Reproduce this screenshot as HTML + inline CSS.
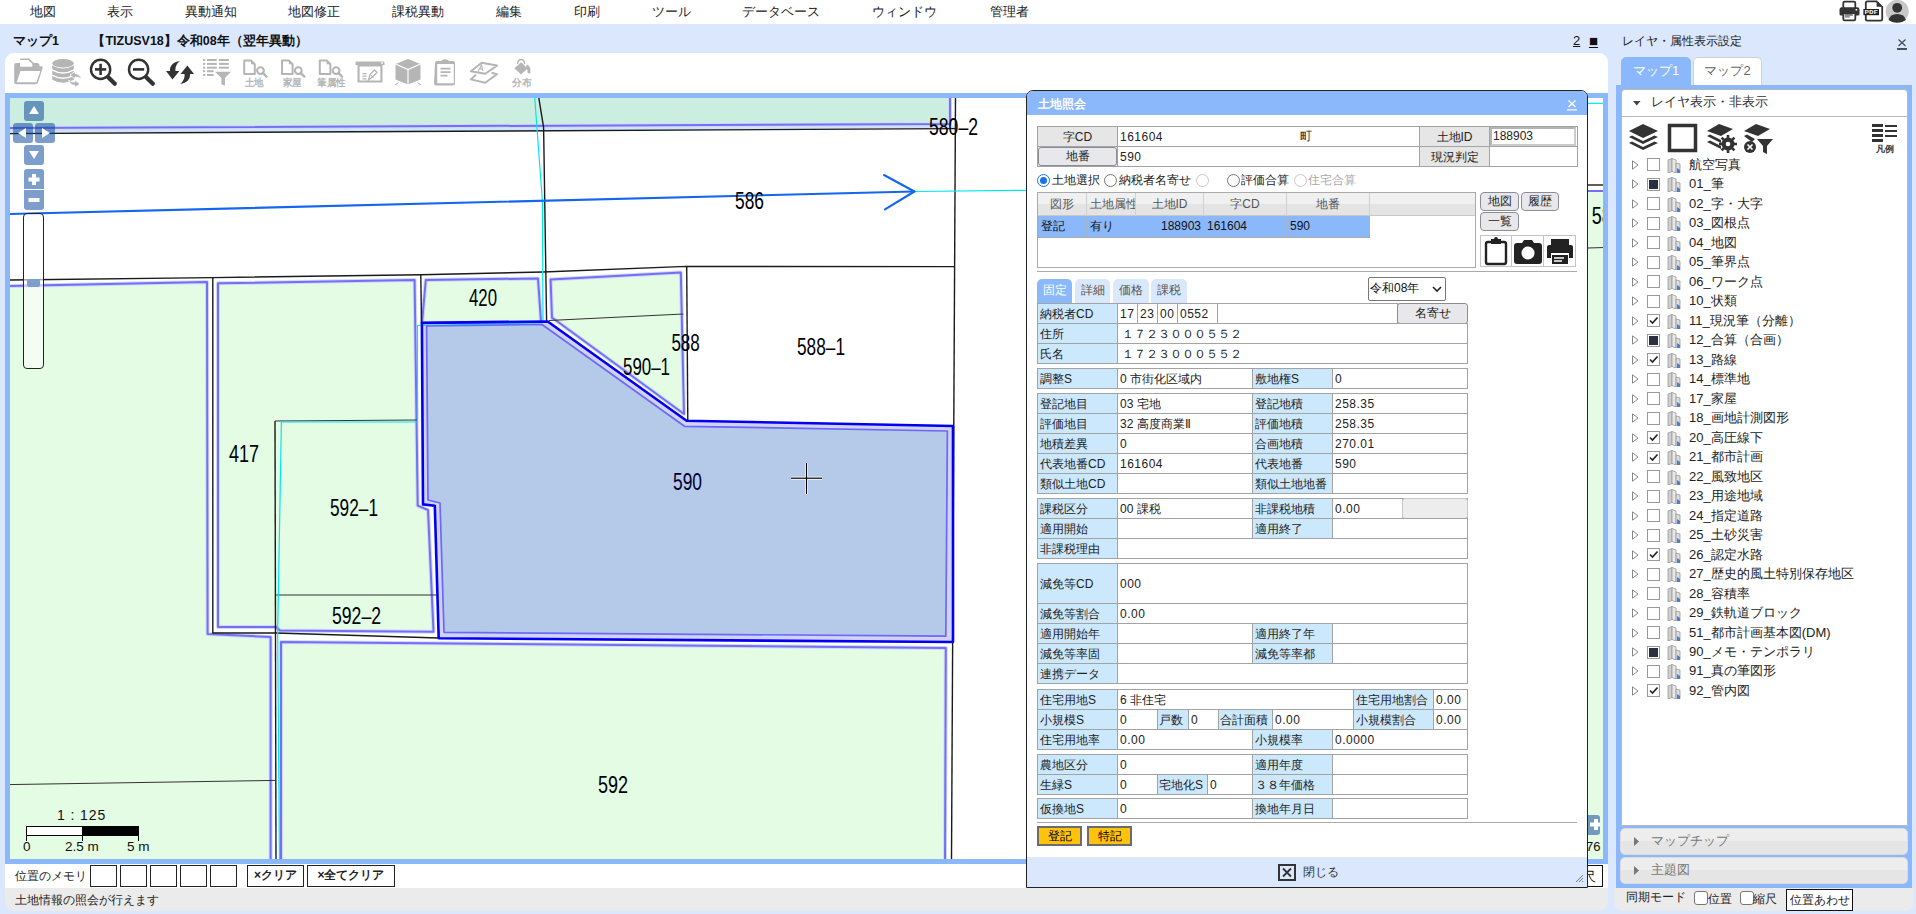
<!DOCTYPE html>
<html><head><meta charset="utf-8">
<style>
*{box-sizing:border-box;margin:0;padding:0}
html,body{width:1916px;height:914px;overflow:hidden}
body{position:relative;background:#dae7fc;font-family:"Liberation Sans",sans-serif;font-size:13px;color:#222}
.a{position:absolute}
#menu{left:0;top:0;width:1916px;height:24px;background:#fff}
#menu span{position:absolute;top:4px;font-size:13px;line-height:16px;color:#222;white-space:nowrap}
#ttl{left:13px;top:33px;font-weight:bold;font-size:12.5px;line-height:16px;white-space:nowrap;color:#111}
#tool{left:5px;top:53px;width:1603px;height:45px;background:#fff;border-radius:9px 9px 0 0}
#mapbox{left:5px;top:93px;width:1603px;height:771px;border:5px solid #8ab8fb;background:#fff;overflow:hidden}
#mem{left:5px;top:864px;width:1603px;height:24px;background:#fff}
#stat{left:5px;top:888px;width:1603px;height:23px;background:#ebebeb;border-radius:0 0 9px 9px}
#rp{left:1616px;top:85px;width:296px;height:803px;background:#8ab8fb}
#rpbot{left:1614px;top:887px;width:300px;height:23px;background:#ebebeb;border-radius:0 0 9px 9px}
.c{position:absolute;border:1px solid #a3a3a3;overflow:hidden;white-space:nowrap}
#dlg{left:1026px;top:90px;width:562px;height:798px;background:#fff;border:1px solid #222;border-radius:7px 7px 0 0;overflow:hidden}
</style></head><body>
<div id="menu" class="a">
<span style="left:30px">地図</span><span style="left:107px">表示</span><span style="left:185px">異動通知</span><span style="left:288px">地図修正</span><span style="left:392px">課税異動</span><span style="left:496px">編集</span><span style="left:574px">印刷</span><span style="left:652px">ツール</span><span style="left:742px">データベース</span><span style="left:872px">ウィンドウ</span><span style="left:990px">管理者</span>
</div>
<div id="ttl" class="a">マップ1<span style="margin-left:33.5px">【TIZUSV18】令和08年（翌年異動）</span></div>
<div id="tool" class="a"></div>
<!--TOOL-->
<svg class="a" style="left:0;top:53px" width="560" height="40" viewBox="0 53 560 40">
<g fill="#b5b5b5">
<!-- folder -->
<path d="M14.2 65 q0-2 2-2 h3.8 v-3.2 q0-1.3 1.3-1.3 h8 l4.6 4.6 v0 h3 q2.6 0 2.6 2.6 v0.6 h1.6 q2 0 1.5 2 l-4.5 14 q-0.6 2-2.6 2 h-19.3 q-2 0-2-2z"/>
<path d="M20 60 h8.5 l3.8 3.8 v3 h-12.3z" fill="#fff"/>
<path d="M20.5 71 h19.8 l-3.8 11.3 h-19.8z" fill="#fff"/>
<!-- database -->
<ellipse cx="63" cy="63.3" rx="10.8" ry="4.3"/>
<path d="M52.2 65.5 v3.8 q10.8 6 21.6 0 v-3.8 q-10.8 6-21.6 0z"/>
<path d="M52.2 70.8 v3.8 q10.8 6 21.6 0 v-3.8 q-10.8 6-21.6 0z"/>
<path d="M52.2 76 v3.8 q10.8 6 21.6 0 v-3.8 q-10.8 6-21.6 0z"/>
<path d="M70 75 l5-3.5 v2 q5 0.5 6.5 5.5 q-3-2.5-6.5-2 v2z" stroke="#fff" stroke-width="0.8"/>
<path d="M80 84 l-5 3.5 v-2 q-5-0.5-6.5-5.5 q3 2.5 6.5 2 v-2z" stroke="#fff" stroke-width="0.8"/>
<!-- list filter -->
<rect x="203" y="59" width="2.2" height="2"/><rect x="203" y="62.9" width="2.2" height="2"/><rect x="203" y="66.7" width="2.2" height="2"/><rect x="203" y="70.2" width="2.2" height="2"/><rect x="203" y="74" width="2.2" height="2"/>
<rect x="207" y="59" width="9.8" height="2"/><rect x="219" y="59" width="9.9" height="2"/>
<rect x="207" y="62.9" width="9.8" height="2"/><rect x="219" y="62.9" width="9.9" height="2"/>
<rect x="207" y="66.7" width="9.8" height="2"/><rect x="219" y="66.7" width="9.9" height="2"/>
<rect x="207" y="70.2" width="6.6" height="2"/><rect x="207" y="74" width="6.6" height="2"/>
<path d="M215 71.8 h16 l-6 6.3 v7.6 l-3.6-1.4 v-6.2z"/>
<!-- board -->
<path d="M356.5 61.5 h27 q1 0 1 1 v2.5 h-29 v-2.5 q0-1 1-1z"/>
<path d="M357.5 65 h25 v17.5 h-25z M359.6 66.5 v14 h20.8 v-14z"/>
<circle cx="382" cy="63" r="0.9" fill="#fff"/>
<path d="M362.5 73 h4 v1.2 h-4z M362.5 75.6 h4 v1.2 h-4z M362.5 78.2 h4 v1.2 h-4z"/>
<path d="M368.5 80 l1.5-5.5 l4.5-4.5 l2.5 2.5 l-4.5 4.5z M371 75.5 l2.5 2" fill="none" stroke="#b5b5b5" stroke-width="1.3"/>
<!-- cube -->
<path d="M408 59 l12.5 5 v15.5 l-12.5 5 l-12.5-5 v-15.5z"/>
<path d="M408 69.5 v15" stroke="#fff" stroke-width="1.2"/>
<path d="M395.5 64 l12.5 5.5 l12.5-5.5" stroke="#fff" stroke-width="1.2" fill="none"/>
<path d="M395 85 l3.5-2.5 M421 85 l-3.5-2.5" stroke="#b5b5b5" stroke-width="1"/>
<!-- clipboard -->
<path d="M435 63 q0-2 2-2 h4 q1-1.8 4-1.8 q3 0 4 1.8 h4 q2 0 2 2 v20.5 q0 2-2 2 h-17 q-2 0-2-2z M437.2 64 v19.3 h16.6 v-19.3z"/>
<path d="M440.5 67.8 h10 v1.6 h-10z M440.5 71.3 h10 v1.6 h-10z M440.5 74.8 h7 v1.6 h-7z"/>
</g>
<!-- layers A -->
<g fill="none" stroke="#b5b5b5" stroke-width="2" stroke-linejoin="round">
<path d="M470.8 71.2 L481.7 62.8 L497 65.6 L485.2 73.8z"/>
<path d="M476 74.8 L470.8 79.4 L485.2 82.8 L497 74.2 L491.5 72.8"/>
</g>
<path d="M478 71.5 l3.5-6.5 l1.3 6 M479.5 69 h3" fill="none" stroke="#b5b5b5" stroke-width="1.1"/>
<!-- bucket -->
<g fill="#b5b5b5">
<path d="M514.3 68.2 L521.2 62.3 L527.6 68.5 L521 74.6z"/>
<path d="M527 64.5 q3.5 2 3.4 5.5 v3 q-1.7 1.3-2.8-0.5 q0-3 -1.6-5.5z"/>
</g>
<path d="M517.5 63.8 q0.5-4.3 3.6-4.3 q3.3 0 3.5 4.6" fill="none" stroke="#b5b5b5" stroke-width="1.4"/>
<!-- doc + magnifier icons -->
<g fill="none" stroke="#b5b5b5" stroke-width="2" stroke-linejoin="round">
<path d="M244.2 60.5 h6.8 l3.8 3.8 v9.8 h-10.6z"/>
<circle cx="260.5" cy="70.6" r="3.4"/>
<path d="M282 60.5 h6.8 l3.8 3.8 v9.8 h-10.6z"/>
<circle cx="298.3" cy="70.6" r="3.4"/>
<path d="M319.8 60.5 h6.8 l3.8 3.8 v9.8 h-10.6z"/>
<circle cx="336.1" cy="70.6" r="3.4"/>
</g>
<g fill="#b5b5b5"><path d="M251 60.5 l3.8 3.8 h-3.8z"/><path d="M288.8 60.5 l3.8 3.8 h-3.8z"/><path d="M326.6 60.5 l3.8 3.8 h-3.8z"/></g>
<g stroke="#b5b5b5" stroke-width="2.4" stroke-linecap="round">
<line x1="263" y1="73.2" x2="266.5" y2="76.6"/><line x1="300.8" y1="73.2" x2="304.3" y2="76.6"/><line x1="338.6" y1="73.2" x2="342.1" y2="76.6"/>
</g>
<g font-size="9.5" font-weight="bold" fill="#b5b5b5" font-family="Liberation Sans">
<text x="244.5" y="85.8" textLength="19" lengthAdjust="spacingAndGlyphs">土地</text><text x="282.5" y="85.8" textLength="19" lengthAdjust="spacingAndGlyphs">家屋</text><text x="317" y="85.8" textLength="28.5" lengthAdjust="spacingAndGlyphs">筆属性</text><text x="512.3" y="85.8" textLength="19.5" lengthAdjust="spacingAndGlyphs">分布</text>
</g>
<!-- zoom in/out -->
<g fill="none" stroke="#333" stroke-width="2.4">
<circle cx="100.6" cy="69.4" r="9.6"/>
<circle cx="138.6" cy="69.4" r="9.6"/>
</g>
<g stroke="#333" stroke-width="4.2" stroke-linecap="round"><line x1="108.5" y1="77.5" x2="114.8" y2="83.8"/><line x1="146.5" y1="77.5" x2="152.8" y2="83.8"/></g>
<g stroke="#333" stroke-width="2.6"><line x1="95" y1="69.4" x2="106.2" y2="69.4"/><line x1="100.6" y1="63.8" x2="100.6" y2="75"/><line x1="133" y1="69.4" x2="144.2" y2="69.4"/></g>
<!-- refresh -->
<g fill="#333">
<path d="M180 61 C173 62 169.5 66 170 71 L166 71 L172.5 79.6 L179.4 71 L175.5 71 C175 67 177 63 180 61 Z"/>
<path d="M180 84 C187 83 190.5 79 190 74 L194 74 L187.4 65.4 L180.5 74 L184.5 74 C185 78 183 82 180 84 Z"/>
</g>
</svg>
<!--/TOOL-->
<div id="mapbox" class="a"><svg class="a" style="left:0;top:0" width="1593" height="761" viewBox="10 98 1593 761">
<defs><clipPath id="cl"><rect x="10" y="98" width="1593" height="761"/></clipPath></defs>
<g clip-path="url(#cl)" fill="none" stroke-linejoin="round">
<!-- fills -->
<polygon points="8,96 950,96 950,124 8,128" fill="#cceee0"/>
<polygon points="8,129 952,125 955,128.6 8,133.6" fill="#cfe3fa"/>
<polygon points="8,286 207,282 207.6,634 270.6,637 270.6,861 8,861" fill="#e4fbe4"/>
<polygon points="218,283.3 414.6,280 417.7,505.7 428,510 433.5,631.7 280,630.4 276,627 218,627" fill="#e4fbe4"/>
<polygon points="425.8,280 538,278.5 541,322 422,323" fill="#e4fbe4"/>
<polygon points="550.6,279.5 680.8,272.5 684,414 554,319 552,317.8" fill="#e4fbe4"/>
<polygon points="281,642 945.8,648 945,861 281,861" fill="#e4fbe4"/>
<polygon points="1588,191 1605,191 1605,861 1588,861" fill="#e4fbe4"/>
<polygon points="421.9,322.9 547.7,321.5 686.6,420.7 953,426 953,642 438.7,638.3 434.8,505.7 423,504.4" fill="#d2d2fc"/>
<!-- purple halos -->
<g stroke="#d4d6fb" stroke-width="4">
<polyline points="8,128 950,124 950,96"/>
<polyline points="8,286 207,282 207.6,634 270.6,637 270.6,861"/>
<polygon points="218,283.3 414.6,280 417.7,505.7 428,510 433.5,631.7 280,630.4 276,627 218,627"/>
<polygon points="425.8,280 538,278.5 541,322 422,323"/>
<polygon points="550.6,279.5 680.8,272.5 684,414 554,319 552,317.8"/>
<polyline points="281,861 281,642 945.8,648 945,861"/>
</g>
<g stroke="#6f72f2" stroke-width="2">
<polyline points="8,128 950,124 950,96"/>
<polyline points="8,286 207,282 207.6,634 270.6,637 270.6,861"/>
<polygon points="218,283.3 414.6,280 417.7,505.7 428,510 433.5,631.7 280,630.4 276,627 218,627"/>
<polygon points="425.8,280 538,278.5 541,322 422,323"/>
<polygon points="550.6,279.5 680.8,272.5 684,414 554,319 552,317.8"/>
<polyline points="281,861 281,642 945.8,648 945,861"/>
<line x1="1588" y1="191" x2="1605" y2="191"/>
</g>
<!-- black lines -->
<g stroke="#1a1a1a" stroke-width="1.4">
<polyline points="8,133.6 955,128.6"/>
<polyline points="538.5,96 543.6,127.4 546.6,322"/>
<polyline points="955.5,96 951.5,861"/>
<polyline points="8,280 213,277.6 420.8,274.7 543,272 686.7,266.4 955,266.6"/>
<polyline points="212.8,277.6 212.8,633 275.9,633 438.7,638"/>
<line x1="420.8" y1="274.7" x2="421.5" y2="323"/>
<line x1="686.7" y1="266.4" x2="687.8" y2="420.7"/>
<line x1="275" y1="421" x2="276" y2="861"/>
<line x1="1588" y1="185" x2="1605" y2="185"/>
</g>
<g stroke="#333" stroke-width="1">
<line x1="275" y1="421" x2="418" y2="420"/>
<line x1="276" y1="595" x2="436" y2="595"/>
<line x1="548.8" y1="320.5" x2="683.4" y2="314"/>
<line x1="8" y1="784.6" x2="275.7" y2="780.4"/>
<line x1="1588" y1="248" x2="1605" y2="247.5"/>
</g>
<!-- cyan -->
<g stroke="#00e6f0" stroke-width="1.2">
<polyline points="534.6,96 542.4,201 543,322"/>
<polyline points="542,323 417.5,325.5 417.5,422 281.4,422 277.7,630 279.4,861"/>
<line x1="914" y1="191.5" x2="1030" y2="190.3"/>
<line x1="1588" y1="103.3" x2="1605" y2="103.3"/>
</g>
<!-- road -->
<g stroke="#1466f0" stroke-width="2.1" stroke-linecap="round">
<line x1="8" y1="214" x2="914.4" y2="191.5"/>
<polyline points="884,175 914.4,191.5 885,209.4"/>
</g>
<polygon points="426.6,326 542,324.5 684.5,426.3 947.4,431 945.8,636.2 444,632.3 440,503 428,500" fill="#b5c9e9" stroke="#6a6af5" stroke-width="1.7"/>
<!-- 590 outline -->
<polygon points="421.9,322.9 547.7,321.5 686.6,420.7 953,426 953,642 438.7,638.3 434.8,505.7 423,504.4" stroke="#0000f0" stroke-width="2.6"/>
<!-- crosshair -->
<g stroke="#fff" stroke-width="3"><line x1="791" y1="478.2" x2="822" y2="478.2"/><line x1="806.5" y1="463" x2="806.5" y2="494"/></g>
<g stroke="#000" stroke-width="1.2"><line x1="791" y1="478.2" x2="822" y2="478.2"/><line x1="806.5" y1="463" x2="806.5" y2="494"/></g>
</g>
<!-- labels -->
<g font-family="Liberation Sans" font-size="23" fill="#000" stroke="none">
<text x="929" y="135" textLength="49" lengthAdjust="spacingAndGlyphs">580–2</text>
<text x="735" y="209.4" textLength="29" lengthAdjust="spacingAndGlyphs">586</text>
<text x="469" y="305.8" textLength="28" lengthAdjust="spacingAndGlyphs">420</text>
<text x="671.4" y="351" textLength="28.4" lengthAdjust="spacingAndGlyphs">588</text>
<text x="797" y="355" textLength="48" lengthAdjust="spacingAndGlyphs">588–1</text>
<text x="623" y="374.8" textLength="47" lengthAdjust="spacingAndGlyphs">590–1</text>
<text x="229" y="461.5" textLength="30" lengthAdjust="spacingAndGlyphs">417</text>
<text x="673" y="489.6" textLength="29" lengthAdjust="spacingAndGlyphs" fill="#000030">590</text>
<text x="330" y="516" textLength="48" lengthAdjust="spacingAndGlyphs">592–1</text>
<text x="332" y="624" textLength="49" lengthAdjust="spacingAndGlyphs">592–2</text>
<text x="598" y="793" textLength="30" lengthAdjust="spacingAndGlyphs">592</text>
<text x="1591.8" y="224" textLength="20" lengthAdjust="spacingAndGlyphs">58</text>
</g>
</svg>
</div>
<div id="mem" class="a"></div>
<div id="stat" class="a"></div>
<!--MISC-->
<!-- map nav controls -->
<div class="a" style="left:24px;top:101px;width:20px;height:20px;background:rgba(10,70,155,0.53);border-radius:3px"></div>
<div class="a" style="left:13px;top:123px;width:20px;height:20px;background:rgba(10,70,155,0.53);border-radius:3px"></div>
<div class="a" style="left:35px;top:123px;width:20px;height:20px;background:rgba(10,70,155,0.53);border-radius:3px"></div>
<div class="a" style="left:24px;top:145px;width:20px;height:20px;background:rgba(10,70,155,0.53);border-radius:3px"></div>
<div class="a" style="left:24px;top:169px;width:20px;height:20px;background:rgba(10,70,155,0.53);border-radius:3px 3px 0 0"></div>
<div class="a" style="left:24px;top:190px;width:20px;height:20px;background:rgba(10,70,155,0.53);border-radius:0 0 3px 3px"></div>
<svg class="a" style="left:10px;top:98px" width="50" height="115" viewBox="10 98 50 115">
<g fill="#fff">
<path d="M34 106 l5 8 h-10z"/>
<path d="M18 133 l8-5 v10z"/>
<path d="M50 133 l-8-5 v10z"/>
<path d="M34 159 l5-8 h-10z"/>
<path d="M32 174 h4 v3.5 h3.5 v4 h-3.5 v3.5 h-4 v-3.5 h-3.5 v-4 h3.5z"/>
<path d="M28.5 198 h11 v4 h-11z"/>
</g>
</svg>
<div class="a" style="left:23px;top:213px;width:21px;height:156px;border:1.3px solid #222;border-radius:4px;background:rgba(255,255,255,0.6)"></div>
<div class="a" style="left:27px;top:279px;width:13px;height:8px;background:#7f9fcb;border-radius:2px"></div>
<!-- scale bar -->
<div class="a" style="left:57px;top:807px;font-size:14px;line-height:16px;color:#111;white-space:nowrap;letter-spacing:0.9px">1 : 125</div>
<div class="a" style="left:26px;top:826px;width:57px;height:10px;background:#fff;border:1px solid #000"></div>
<div class="a" style="left:82px;top:826px;width:57px;height:10px;background:#000"></div>
<div class="a" style="left:26px;top:835px;width:1px;height:6px;background:#000"></div>
<div class="a" style="left:82px;top:835px;width:1px;height:6px;background:#000"></div>
<div class="a" style="left:138px;top:835px;width:1px;height:6px;background:#000"></div>
<div class="a" style="left:23px;top:839px;font-size:13.5px;line-height:16px;color:#111">0</div>
<div class="a" style="left:65px;top:839px;font-size:13.5px;line-height:16px;color:#111;white-space:nowrap">2.5 m</div>
<div class="a" style="left:127px;top:839px;font-size:13.5px;line-height:16px;color:#111;white-space:nowrap">5 m</div>
<!-- right-of-map bits -->
<div class="a" style="left:1585px;top:815px;width:15px;height:20px;background:rgba(10,70,155,0.53);border-radius:3px"></div>
<svg class="a" style="left:1587px;top:815px" width="13" height="20" viewBox="0 0 13 20"><path d="M3 7.5 h4 v-3.5 h4 v3.5 h3.5 v4 h-3.5 v3.5 h-4 v-3.5 h-4z" fill="#fff"/></svg>
<div class="a" style="left:1586px;top:839px;font-size:13px;line-height:16px;color:#111">76</div>
<div class="a" style="left:1578px;top:865px;width:25px;height:22px;border:1.3px solid #111;background:#fff;font-size:13px;line-height:19px;color:#111;padding-left:0;white-space:nowrap;overflow:hidden"><span style="position:absolute;left:4px;top:1px">尺</span></div>
<!-- memory bar -->
<div class="a" style="left:15px;top:868px;font-size:12px;line-height:16px;color:#222;white-space:nowrap">位置のメモリ</div>
<div class="a" style="left:90px;top:865px;width:27px;height:22px;border:1.3px solid #222;background:#fff"></div>
<div class="a" style="left:120px;top:865px;width:27px;height:22px;border:1.3px solid #222;background:#fff"></div>
<div class="a" style="left:150px;top:865px;width:27px;height:22px;border:1.3px solid #222;background:#fff"></div>
<div class="a" style="left:180px;top:865px;width:27px;height:22px;border:1.3px solid #222;background:#fff"></div>
<div class="a" style="left:210px;top:865px;width:27px;height:22px;border:1.3px solid #222;background:#fff"></div>
<div class="a" style="left:247px;top:865px;width:57px;height:22px;border:1.3px solid #222;background:#fff;font-size:12px;font-weight:bold;line-height:19px;text-align:center;color:#222;white-space:nowrap">×クリア</div>
<div class="a" style="left:307px;top:865px;width:88px;height:22px;border:1.3px solid #222;background:#fff;font-size:12px;font-weight:bold;line-height:19px;text-align:center;color:#222;white-space:nowrap">×全てクリア</div>
<div class="a" style="left:15px;top:892px;font-size:12px;line-height:16px;color:#222;white-space:nowrap">土地情報の照会が行えます</div>
<!-- 2 ■ -->
<div class="a" style="left:1573px;top:33px;font-size:13px;line-height:16px;color:#111;text-decoration:underline;white-space:nowrap">2</div>
<div class="a" style="left:1589px;top:32px;font-size:15px;line-height:17px;color:#111;text-decoration:underline;white-space:nowrap">■</div>
<!-- top-right icons -->
<svg class="a" style="left:1836px;top:0" width="80" height="24" viewBox="1836 0 80 24">
<path d="M1843.3 8 V3 q0-1.3 1.3-1.3 h9.4 q1.3 0 1.3 1.3 V8" fill="none" stroke="#333" stroke-width="1.8"/>
<path d="M1839.5 9.5 q0-2.3 2.3-2.3 h15.4 q2.3 0 2.3 2.3 v4.5 q0 1.6-1.6 1.6 h-16.8 q-1.6 0-1.6-1.6z" fill="#333"/>
<path d="M1843.3 13 V19 q0 1.4 1.4 1.4 h9.2 q1.4 0 1.4-1.4 V13z" fill="#fff" stroke="#333" stroke-width="1.8"/>
<rect x="1844.8" y="14.3" width="8" height="1.3" fill="#444"/><rect x="1844.8" y="16.3" width="5" height="1.2" fill="#666"/>
<rect x="1855.6" y="9" width="1.6" height="1.5" fill="#fff"/>
<path d="M1865.8 20 V3 q0-1.6 1.6-1.6 h9.2 l5.6 5.4 V19 q0 1.6-1.6 1.6 h-13.2 q-1.6 0-1.6-1.6z" fill="none" stroke="#333" stroke-width="1.8"/>
<path d="M1876.6 1.4 l5.6 5.4 h-5.6z" fill="#333"/>
<rect x="1863.4" y="9" width="15.6" height="6.2" fill="#222"/>
<text x="1864.6" y="14.3" font-size="5.6" font-weight="bold" fill="#eee" font-family="Liberation Mono" textLength="13.5" lengthAdjust="spacingAndGlyphs">PDF</text>
<circle cx="1897.2" cy="11.3" r="11.5" fill="#c8c8c8"/>
<circle cx="1897.2" cy="7.8" r="4.9" fill="#333"/>
<path d="M1888.5 20 q1.5-6 8.7-6 q7.2 0 8.7 6 q-3.5 2.8-8.7 2.8 q-5.2 0-8.7-2.8z" fill="#333"/>
</svg>

<!--/MISC-->
<!--RP-->
<div class="a" style="left:1622px;top:33px;font-size:12px;line-height:16px;color:#222;white-space:nowrap">レイヤ・属性表示設定</div>
<svg class="a" style="left:1896px;top:38px" width="12" height="12" viewBox="0 0 12 12"><path d="M2.5 1.5 L9.5 8 M9.5 1.5 L2.5 8" stroke="#444" stroke-width="1.1"/><rect x="1" y="10.3" width="10" height="1.4" fill="#111"/></svg>
<div class="a" style="left:1621px;top:57px;width:70px;height:29px;background:#8ab8fb;border:1px solid #8ab8fb;border-radius:5px 5px 0 0;text-align:center;line-height:26px;font-size:13px;color:#fff">マップ1</div>
<div class="a" style="left:1693px;top:57px;width:69px;height:28px;background:#fff;border:1px solid #d0d0d0;border-bottom:none;border-radius:5px 5px 0 0;text-align:center;line-height:26px;font-size:13px;color:#666">マップ2</div>
<div class="a" style="left:1616px;top:85px;width:296px;height:803px;background:#8ab8fb"></div>
<div class="a" style="left:1621px;top:89px;width:287px;height:737px;background:#fff;border:1px solid #b8b8b8;border-radius:4px 4px 0 0"></div>
<div class="a" style="left:1622px;top:116px;width:285px;height:1px;background:#b8b8b8"></div>
<svg class="a" style="left:1633px;top:100.5px" width="8" height="5" viewBox="0 0 8 5"><path d="M0 0 H7.5 L3.75 4.6z" fill="#444"/></svg>
<div class="a" style="left:1651px;top:94px;font-size:13px;line-height:16px;color:#333;white-space:nowrap">レイヤ表示・非表示</div>
<svg class="a" style="left:1627px;top:121px" width="280" height="34" viewBox="0 0 280 34">
<g fill="#333">
<path d="M2 10 L16 3 L31 10 L16 17z"/>
<path d="M2 16 L5 14.5 L16 20 L27.5 14.5 L31 16 L16 23z"/>
<path d="M2 22 L5 20.5 L16 26 L27.5 20.5 L31 22 L16 29z"/>
</g>
<rect x="42.5" y="4.5" width="26" height="25" fill="none" stroke="#333" stroke-width="3.5"/>
<g fill="#333">
<path d="M80 10 L92 3 L106 8 L94 15z"/>
<path d="M80 15 L83 13.5 L94 19 L94 22z"/>
<path d="M80 21 L83 19.5 L94 25 L94 28z"/>
<circle cx="101" cy="23" r="6.5"/>
</g>
<circle cx="101" cy="23" r="2.5" fill="#fff"/>
<g stroke="#333" stroke-width="2.6"><path d="M101 14 V32 M92 23 H110 M94.6 16.6 L107.4 29.4 M107.4 16.6 L94.6 29.4"/></g>
<circle cx="101" cy="23" r="2.3" fill="#fff"/>
<g fill="#333">
<path d="M117 10 L129 3 L143 8 L131 15z"/>
<path d="M117 15 L120 13.5 L128 18 L125 21z"/>
<path d="M130 18 H146 L140 25 V33 L136 31 V25z"/>
<circle cx="123" cy="26" r="6"/>
</g>
<path d="M120.5 23.5 L125.5 28.5 M125.5 23.5 L120.5 28.5" stroke="#fff" stroke-width="1.6"/>
<g fill="#333">
<rect x="245" y="3" width="11" height="3"/><rect x="245" y="8" width="11" height="3"/><rect x="245" y="13" width="11" height="3"/><rect x="245" y="18" width="11" height="3"/>
<rect x="258" y="4" width="12" height="2"/><rect x="258" y="9" width="12" height="2"/><rect x="258" y="14" width="12" height="2"/>
</g>
<text x="249" y="31" font-size="9" font-weight="bold" fill="#333" font-family="Liberation Sans">凡例</text>
</svg>
<svg class="a" style="left:1632px;top:160px" width="7" height="10" viewBox="0 0 7 10"><path d="M0.5 0.8 L6 5 L0.5 9.2z" fill="none" stroke="#888" stroke-width="1"/></svg>
<div class="a" style="left:1647px;top:158px;width:13px;height:13px;border:1px solid #9a9a9a;background:#fff"></div>
<svg class="a" style="left:1667px;top:158px" width="14" height="15" viewBox="0 0 14 15"><path d="M1 2 L5 0.5 L5 13.5 L1 15z" fill="#cfcfcf" stroke="#999" stroke-width="0.8"/><path d="M5 0.5 L9 2 L9 15 L5 13.5z" fill="#e8e8e8" stroke="#999" stroke-width="0.8"/><path d="M9 5 L13 6 L13 15 L9 15z" fill="#ddd" stroke="#999" stroke-width="0.8"/><path d="M10 10 L13 12 L13 15 L10 15z" fill="#4a7fd0"/></svg>
<div class="a" style="left:1689px;top:157px;font-size:13px;line-height:16px;color:#222;white-space:nowrap">航空写真</div>
<svg class="a" style="left:1632px;top:179px" width="7" height="10" viewBox="0 0 7 10"><path d="M0.5 0.8 L6 5 L0.5 9.2z" fill="none" stroke="#888" stroke-width="1"/></svg>
<div class="a" style="left:1647px;top:178px;width:13px;height:13px;border:1px solid #9a9a9a;background:#fff"><div style="position:absolute;left:1px;top:1px;width:9px;height:9px;background:#2a3040"></div></div>
<svg class="a" style="left:1667px;top:177px" width="14" height="15" viewBox="0 0 14 15"><path d="M1 2 L5 0.5 L5 13.5 L1 15z" fill="#cfcfcf" stroke="#999" stroke-width="0.8"/><path d="M5 0.5 L9 2 L9 15 L5 13.5z" fill="#e8e8e8" stroke="#999" stroke-width="0.8"/><path d="M9 5 L13 6 L13 15 L9 15z" fill="#ddd" stroke="#999" stroke-width="0.8"/><path d="M10 10 L13 12 L13 15 L10 15z" fill="#4a7fd0"/></svg>
<div class="a" style="left:1689px;top:176px;font-size:13px;line-height:16px;color:#222;white-space:nowrap">01_筆</div>
<svg class="a" style="left:1632px;top:199px" width="7" height="10" viewBox="0 0 7 10"><path d="M0.5 0.8 L6 5 L0.5 9.2z" fill="none" stroke="#888" stroke-width="1"/></svg>
<div class="a" style="left:1647px;top:197px;width:13px;height:13px;border:1px solid #9a9a9a;background:#fff"></div>
<svg class="a" style="left:1667px;top:197px" width="14" height="15" viewBox="0 0 14 15"><path d="M1 2 L5 0.5 L5 13.5 L1 15z" fill="#cfcfcf" stroke="#999" stroke-width="0.8"/><path d="M5 0.5 L9 2 L9 15 L5 13.5z" fill="#e8e8e8" stroke="#999" stroke-width="0.8"/><path d="M9 5 L13 6 L13 15 L9 15z" fill="#ddd" stroke="#999" stroke-width="0.8"/><path d="M10 10 L13 12 L13 15 L10 15z" fill="#4a7fd0"/></svg>
<div class="a" style="left:1689px;top:196px;font-size:13px;line-height:16px;color:#222;white-space:nowrap">02_字・大字</div>
<svg class="a" style="left:1632px;top:218px" width="7" height="10" viewBox="0 0 7 10"><path d="M0.5 0.8 L6 5 L0.5 9.2z" fill="none" stroke="#888" stroke-width="1"/></svg>
<div class="a" style="left:1647px;top:217px;width:13px;height:13px;border:1px solid #9a9a9a;background:#fff"></div>
<svg class="a" style="left:1667px;top:216px" width="14" height="15" viewBox="0 0 14 15"><path d="M1 2 L5 0.5 L5 13.5 L1 15z" fill="#cfcfcf" stroke="#999" stroke-width="0.8"/><path d="M5 0.5 L9 2 L9 15 L5 13.5z" fill="#e8e8e8" stroke="#999" stroke-width="0.8"/><path d="M9 5 L13 6 L13 15 L9 15z" fill="#ddd" stroke="#999" stroke-width="0.8"/><path d="M10 10 L13 12 L13 15 L10 15z" fill="#4a7fd0"/></svg>
<div class="a" style="left:1689px;top:215px;font-size:13px;line-height:16px;color:#222;white-space:nowrap">03_図根点</div>
<svg class="a" style="left:1632px;top:238px" width="7" height="10" viewBox="0 0 7 10"><path d="M0.5 0.8 L6 5 L0.5 9.2z" fill="none" stroke="#888" stroke-width="1"/></svg>
<div class="a" style="left:1647px;top:236px;width:13px;height:13px;border:1px solid #9a9a9a;background:#fff"></div>
<svg class="a" style="left:1667px;top:236px" width="14" height="15" viewBox="0 0 14 15"><path d="M1 2 L5 0.5 L5 13.5 L1 15z" fill="#cfcfcf" stroke="#999" stroke-width="0.8"/><path d="M5 0.5 L9 2 L9 15 L5 13.5z" fill="#e8e8e8" stroke="#999" stroke-width="0.8"/><path d="M9 5 L13 6 L13 15 L9 15z" fill="#ddd" stroke="#999" stroke-width="0.8"/><path d="M10 10 L13 12 L13 15 L10 15z" fill="#4a7fd0"/></svg>
<div class="a" style="left:1689px;top:235px;font-size:13px;line-height:16px;color:#222;white-space:nowrap">04_地図</div>
<svg class="a" style="left:1632px;top:257px" width="7" height="10" viewBox="0 0 7 10"><path d="M0.5 0.8 L6 5 L0.5 9.2z" fill="none" stroke="#888" stroke-width="1"/></svg>
<div class="a" style="left:1647px;top:256px;width:13px;height:13px;border:1px solid #9a9a9a;background:#fff"></div>
<svg class="a" style="left:1667px;top:255px" width="14" height="15" viewBox="0 0 14 15"><path d="M1 2 L5 0.5 L5 13.5 L1 15z" fill="#cfcfcf" stroke="#999" stroke-width="0.8"/><path d="M5 0.5 L9 2 L9 15 L5 13.5z" fill="#e8e8e8" stroke="#999" stroke-width="0.8"/><path d="M9 5 L13 6 L13 15 L9 15z" fill="#ddd" stroke="#999" stroke-width="0.8"/><path d="M10 10 L13 12 L13 15 L10 15z" fill="#4a7fd0"/></svg>
<div class="a" style="left:1689px;top:254px;font-size:13px;line-height:16px;color:#222;white-space:nowrap">05_筆界点</div>
<svg class="a" style="left:1632px;top:277px" width="7" height="10" viewBox="0 0 7 10"><path d="M0.5 0.8 L6 5 L0.5 9.2z" fill="none" stroke="#888" stroke-width="1"/></svg>
<div class="a" style="left:1647px;top:275px;width:13px;height:13px;border:1px solid #9a9a9a;background:#fff"></div>
<svg class="a" style="left:1667px;top:275px" width="14" height="15" viewBox="0 0 14 15"><path d="M1 2 L5 0.5 L5 13.5 L1 15z" fill="#cfcfcf" stroke="#999" stroke-width="0.8"/><path d="M5 0.5 L9 2 L9 15 L5 13.5z" fill="#e8e8e8" stroke="#999" stroke-width="0.8"/><path d="M9 5 L13 6 L13 15 L9 15z" fill="#ddd" stroke="#999" stroke-width="0.8"/><path d="M10 10 L13 12 L13 15 L10 15z" fill="#4a7fd0"/></svg>
<div class="a" style="left:1689px;top:274px;font-size:13px;line-height:16px;color:#222;white-space:nowrap">06_ワーク点</div>
<svg class="a" style="left:1632px;top:296px" width="7" height="10" viewBox="0 0 7 10"><path d="M0.5 0.8 L6 5 L0.5 9.2z" fill="none" stroke="#888" stroke-width="1"/></svg>
<div class="a" style="left:1647px;top:295px;width:13px;height:13px;border:1px solid #9a9a9a;background:#fff"></div>
<svg class="a" style="left:1667px;top:294px" width="14" height="15" viewBox="0 0 14 15"><path d="M1 2 L5 0.5 L5 13.5 L1 15z" fill="#cfcfcf" stroke="#999" stroke-width="0.8"/><path d="M5 0.5 L9 2 L9 15 L5 13.5z" fill="#e8e8e8" stroke="#999" stroke-width="0.8"/><path d="M9 5 L13 6 L13 15 L9 15z" fill="#ddd" stroke="#999" stroke-width="0.8"/><path d="M10 10 L13 12 L13 15 L10 15z" fill="#4a7fd0"/></svg>
<div class="a" style="left:1689px;top:293px;font-size:13px;line-height:16px;color:#222;white-space:nowrap">10_状類</div>
<svg class="a" style="left:1632px;top:316px" width="7" height="10" viewBox="0 0 7 10"><path d="M0.5 0.8 L6 5 L0.5 9.2z" fill="none" stroke="#888" stroke-width="1"/></svg>
<div class="a" style="left:1647px;top:314px;width:13px;height:13px;border:1px solid #9a9a9a;background:#fff"><svg style="position:absolute;left:0;top:0" width="11" height="11" viewBox="0 0 11 11"><path d="M2 5.5 L4.5 8 L9.5 2.5" fill="none" stroke="#222" stroke-width="1.6"/></svg></div>
<svg class="a" style="left:1667px;top:314px" width="14" height="15" viewBox="0 0 14 15"><path d="M1 2 L5 0.5 L5 13.5 L1 15z" fill="#cfcfcf" stroke="#999" stroke-width="0.8"/><path d="M5 0.5 L9 2 L9 15 L5 13.5z" fill="#e8e8e8" stroke="#999" stroke-width="0.8"/><path d="M9 5 L13 6 L13 15 L9 15z" fill="#ddd" stroke="#999" stroke-width="0.8"/><path d="M10 10 L13 12 L13 15 L10 15z" fill="#4a7fd0"/></svg>
<div class="a" style="left:1689px;top:313px;font-size:13px;line-height:16px;color:#222;white-space:nowrap">11_現況筆（分離）</div>
<svg class="a" style="left:1632px;top:335px" width="7" height="10" viewBox="0 0 7 10"><path d="M0.5 0.8 L6 5 L0.5 9.2z" fill="none" stroke="#888" stroke-width="1"/></svg>
<div class="a" style="left:1647px;top:334px;width:13px;height:13px;border:1px solid #9a9a9a;background:#fff"><div style="position:absolute;left:1px;top:1px;width:9px;height:9px;background:#2a3040"></div></div>
<svg class="a" style="left:1667px;top:333px" width="14" height="15" viewBox="0 0 14 15"><path d="M1 2 L5 0.5 L5 13.5 L1 15z" fill="#cfcfcf" stroke="#999" stroke-width="0.8"/><path d="M5 0.5 L9 2 L9 15 L5 13.5z" fill="#e8e8e8" stroke="#999" stroke-width="0.8"/><path d="M9 5 L13 6 L13 15 L9 15z" fill="#ddd" stroke="#999" stroke-width="0.8"/><path d="M10 10 L13 12 L13 15 L10 15z" fill="#4a7fd0"/></svg>
<div class="a" style="left:1689px;top:332px;font-size:13px;line-height:16px;color:#222;white-space:nowrap">12_合算（合画）</div>
<svg class="a" style="left:1632px;top:355px" width="7" height="10" viewBox="0 0 7 10"><path d="M0.5 0.8 L6 5 L0.5 9.2z" fill="none" stroke="#888" stroke-width="1"/></svg>
<div class="a" style="left:1647px;top:353px;width:13px;height:13px;border:1px solid #9a9a9a;background:#fff"><svg style="position:absolute;left:0;top:0" width="11" height="11" viewBox="0 0 11 11"><path d="M2 5.5 L4.5 8 L9.5 2.5" fill="none" stroke="#222" stroke-width="1.6"/></svg></div>
<svg class="a" style="left:1667px;top:353px" width="14" height="15" viewBox="0 0 14 15"><path d="M1 2 L5 0.5 L5 13.5 L1 15z" fill="#cfcfcf" stroke="#999" stroke-width="0.8"/><path d="M5 0.5 L9 2 L9 15 L5 13.5z" fill="#e8e8e8" stroke="#999" stroke-width="0.8"/><path d="M9 5 L13 6 L13 15 L9 15z" fill="#ddd" stroke="#999" stroke-width="0.8"/><path d="M10 10 L13 12 L13 15 L10 15z" fill="#4a7fd0"/></svg>
<div class="a" style="left:1689px;top:352px;font-size:13px;line-height:16px;color:#222;white-space:nowrap">13_路線</div>
<svg class="a" style="left:1632px;top:374px" width="7" height="10" viewBox="0 0 7 10"><path d="M0.5 0.8 L6 5 L0.5 9.2z" fill="none" stroke="#888" stroke-width="1"/></svg>
<div class="a" style="left:1647px;top:373px;width:13px;height:13px;border:1px solid #9a9a9a;background:#fff"></div>
<svg class="a" style="left:1667px;top:372px" width="14" height="15" viewBox="0 0 14 15"><path d="M1 2 L5 0.5 L5 13.5 L1 15z" fill="#cfcfcf" stroke="#999" stroke-width="0.8"/><path d="M5 0.5 L9 2 L9 15 L5 13.5z" fill="#e8e8e8" stroke="#999" stroke-width="0.8"/><path d="M9 5 L13 6 L13 15 L9 15z" fill="#ddd" stroke="#999" stroke-width="0.8"/><path d="M10 10 L13 12 L13 15 L10 15z" fill="#4a7fd0"/></svg>
<div class="a" style="left:1689px;top:371px;font-size:13px;line-height:16px;color:#222;white-space:nowrap">14_標準地</div>
<svg class="a" style="left:1632px;top:394px" width="7" height="10" viewBox="0 0 7 10"><path d="M0.5 0.8 L6 5 L0.5 9.2z" fill="none" stroke="#888" stroke-width="1"/></svg>
<div class="a" style="left:1647px;top:392px;width:13px;height:13px;border:1px solid #9a9a9a;background:#fff"></div>
<svg class="a" style="left:1667px;top:392px" width="14" height="15" viewBox="0 0 14 15"><path d="M1 2 L5 0.5 L5 13.5 L1 15z" fill="#cfcfcf" stroke="#999" stroke-width="0.8"/><path d="M5 0.5 L9 2 L9 15 L5 13.5z" fill="#e8e8e8" stroke="#999" stroke-width="0.8"/><path d="M9 5 L13 6 L13 15 L9 15z" fill="#ddd" stroke="#999" stroke-width="0.8"/><path d="M10 10 L13 12 L13 15 L10 15z" fill="#4a7fd0"/></svg>
<div class="a" style="left:1689px;top:391px;font-size:13px;line-height:16px;color:#222;white-space:nowrap">17_家屋</div>
<svg class="a" style="left:1632px;top:413px" width="7" height="10" viewBox="0 0 7 10"><path d="M0.5 0.8 L6 5 L0.5 9.2z" fill="none" stroke="#888" stroke-width="1"/></svg>
<div class="a" style="left:1647px;top:412px;width:13px;height:13px;border:1px solid #9a9a9a;background:#fff"></div>
<svg class="a" style="left:1667px;top:411px" width="14" height="15" viewBox="0 0 14 15"><path d="M1 2 L5 0.5 L5 13.5 L1 15z" fill="#cfcfcf" stroke="#999" stroke-width="0.8"/><path d="M5 0.5 L9 2 L9 15 L5 13.5z" fill="#e8e8e8" stroke="#999" stroke-width="0.8"/><path d="M9 5 L13 6 L13 15 L9 15z" fill="#ddd" stroke="#999" stroke-width="0.8"/><path d="M10 10 L13 12 L13 15 L10 15z" fill="#4a7fd0"/></svg>
<div class="a" style="left:1689px;top:410px;font-size:13px;line-height:16px;color:#222;white-space:nowrap">18_画地計測図形</div>
<svg class="a" style="left:1632px;top:433px" width="7" height="10" viewBox="0 0 7 10"><path d="M0.5 0.8 L6 5 L0.5 9.2z" fill="none" stroke="#888" stroke-width="1"/></svg>
<div class="a" style="left:1647px;top:431px;width:13px;height:13px;border:1px solid #9a9a9a;background:#fff"><svg style="position:absolute;left:0;top:0" width="11" height="11" viewBox="0 0 11 11"><path d="M2 5.5 L4.5 8 L9.5 2.5" fill="none" stroke="#222" stroke-width="1.6"/></svg></div>
<svg class="a" style="left:1667px;top:431px" width="14" height="15" viewBox="0 0 14 15"><path d="M1 2 L5 0.5 L5 13.5 L1 15z" fill="#cfcfcf" stroke="#999" stroke-width="0.8"/><path d="M5 0.5 L9 2 L9 15 L5 13.5z" fill="#e8e8e8" stroke="#999" stroke-width="0.8"/><path d="M9 5 L13 6 L13 15 L9 15z" fill="#ddd" stroke="#999" stroke-width="0.8"/><path d="M10 10 L13 12 L13 15 L10 15z" fill="#4a7fd0"/></svg>
<div class="a" style="left:1689px;top:430px;font-size:13px;line-height:16px;color:#222;white-space:nowrap">20_高圧線下</div>
<svg class="a" style="left:1632px;top:452px" width="7" height="10" viewBox="0 0 7 10"><path d="M0.5 0.8 L6 5 L0.5 9.2z" fill="none" stroke="#888" stroke-width="1"/></svg>
<div class="a" style="left:1647px;top:451px;width:13px;height:13px;border:1px solid #9a9a9a;background:#fff"><svg style="position:absolute;left:0;top:0" width="11" height="11" viewBox="0 0 11 11"><path d="M2 5.5 L4.5 8 L9.5 2.5" fill="none" stroke="#222" stroke-width="1.6"/></svg></div>
<svg class="a" style="left:1667px;top:450px" width="14" height="15" viewBox="0 0 14 15"><path d="M1 2 L5 0.5 L5 13.5 L1 15z" fill="#cfcfcf" stroke="#999" stroke-width="0.8"/><path d="M5 0.5 L9 2 L9 15 L5 13.5z" fill="#e8e8e8" stroke="#999" stroke-width="0.8"/><path d="M9 5 L13 6 L13 15 L9 15z" fill="#ddd" stroke="#999" stroke-width="0.8"/><path d="M10 10 L13 12 L13 15 L10 15z" fill="#4a7fd0"/></svg>
<div class="a" style="left:1689px;top:449px;font-size:13px;line-height:16px;color:#222;white-space:nowrap">21_都市計画</div>
<svg class="a" style="left:1632px;top:472px" width="7" height="10" viewBox="0 0 7 10"><path d="M0.5 0.8 L6 5 L0.5 9.2z" fill="none" stroke="#888" stroke-width="1"/></svg>
<div class="a" style="left:1647px;top:470px;width:13px;height:13px;border:1px solid #9a9a9a;background:#fff"></div>
<svg class="a" style="left:1667px;top:470px" width="14" height="15" viewBox="0 0 14 15"><path d="M1 2 L5 0.5 L5 13.5 L1 15z" fill="#cfcfcf" stroke="#999" stroke-width="0.8"/><path d="M5 0.5 L9 2 L9 15 L5 13.5z" fill="#e8e8e8" stroke="#999" stroke-width="0.8"/><path d="M9 5 L13 6 L13 15 L9 15z" fill="#ddd" stroke="#999" stroke-width="0.8"/><path d="M10 10 L13 12 L13 15 L10 15z" fill="#4a7fd0"/></svg>
<div class="a" style="left:1689px;top:469px;font-size:13px;line-height:16px;color:#222;white-space:nowrap">22_風致地区</div>
<svg class="a" style="left:1632px;top:491px" width="7" height="10" viewBox="0 0 7 10"><path d="M0.5 0.8 L6 5 L0.5 9.2z" fill="none" stroke="#888" stroke-width="1"/></svg>
<div class="a" style="left:1647px;top:490px;width:13px;height:13px;border:1px solid #9a9a9a;background:#fff"></div>
<svg class="a" style="left:1667px;top:489px" width="14" height="15" viewBox="0 0 14 15"><path d="M1 2 L5 0.5 L5 13.5 L1 15z" fill="#cfcfcf" stroke="#999" stroke-width="0.8"/><path d="M5 0.5 L9 2 L9 15 L5 13.5z" fill="#e8e8e8" stroke="#999" stroke-width="0.8"/><path d="M9 5 L13 6 L13 15 L9 15z" fill="#ddd" stroke="#999" stroke-width="0.8"/><path d="M10 10 L13 12 L13 15 L10 15z" fill="#4a7fd0"/></svg>
<div class="a" style="left:1689px;top:488px;font-size:13px;line-height:16px;color:#222;white-space:nowrap">23_用途地域</div>
<svg class="a" style="left:1632px;top:511px" width="7" height="10" viewBox="0 0 7 10"><path d="M0.5 0.8 L6 5 L0.5 9.2z" fill="none" stroke="#888" stroke-width="1"/></svg>
<div class="a" style="left:1647px;top:509px;width:13px;height:13px;border:1px solid #9a9a9a;background:#fff"></div>
<svg class="a" style="left:1667px;top:509px" width="14" height="15" viewBox="0 0 14 15"><path d="M1 2 L5 0.5 L5 13.5 L1 15z" fill="#cfcfcf" stroke="#999" stroke-width="0.8"/><path d="M5 0.5 L9 2 L9 15 L5 13.5z" fill="#e8e8e8" stroke="#999" stroke-width="0.8"/><path d="M9 5 L13 6 L13 15 L9 15z" fill="#ddd" stroke="#999" stroke-width="0.8"/><path d="M10 10 L13 12 L13 15 L10 15z" fill="#4a7fd0"/></svg>
<div class="a" style="left:1689px;top:508px;font-size:13px;line-height:16px;color:#222;white-space:nowrap">24_指定道路</div>
<svg class="a" style="left:1632px;top:530px" width="7" height="10" viewBox="0 0 7 10"><path d="M0.5 0.8 L6 5 L0.5 9.2z" fill="none" stroke="#888" stroke-width="1"/></svg>
<div class="a" style="left:1647px;top:529px;width:13px;height:13px;border:1px solid #9a9a9a;background:#fff"></div>
<svg class="a" style="left:1667px;top:528px" width="14" height="15" viewBox="0 0 14 15"><path d="M1 2 L5 0.5 L5 13.5 L1 15z" fill="#cfcfcf" stroke="#999" stroke-width="0.8"/><path d="M5 0.5 L9 2 L9 15 L5 13.5z" fill="#e8e8e8" stroke="#999" stroke-width="0.8"/><path d="M9 5 L13 6 L13 15 L9 15z" fill="#ddd" stroke="#999" stroke-width="0.8"/><path d="M10 10 L13 12 L13 15 L10 15z" fill="#4a7fd0"/></svg>
<div class="a" style="left:1689px;top:527px;font-size:13px;line-height:16px;color:#222;white-space:nowrap">25_土砂災害</div>
<svg class="a" style="left:1632px;top:550px" width="7" height="10" viewBox="0 0 7 10"><path d="M0.5 0.8 L6 5 L0.5 9.2z" fill="none" stroke="#888" stroke-width="1"/></svg>
<div class="a" style="left:1647px;top:548px;width:13px;height:13px;border:1px solid #9a9a9a;background:#fff"><svg style="position:absolute;left:0;top:0" width="11" height="11" viewBox="0 0 11 11"><path d="M2 5.5 L4.5 8 L9.5 2.5" fill="none" stroke="#222" stroke-width="1.6"/></svg></div>
<svg class="a" style="left:1667px;top:548px" width="14" height="15" viewBox="0 0 14 15"><path d="M1 2 L5 0.5 L5 13.5 L1 15z" fill="#cfcfcf" stroke="#999" stroke-width="0.8"/><path d="M5 0.5 L9 2 L9 15 L5 13.5z" fill="#e8e8e8" stroke="#999" stroke-width="0.8"/><path d="M9 5 L13 6 L13 15 L9 15z" fill="#ddd" stroke="#999" stroke-width="0.8"/><path d="M10 10 L13 12 L13 15 L10 15z" fill="#4a7fd0"/></svg>
<div class="a" style="left:1689px;top:547px;font-size:13px;line-height:16px;color:#222;white-space:nowrap">26_認定水路</div>
<svg class="a" style="left:1632px;top:569px" width="7" height="10" viewBox="0 0 7 10"><path d="M0.5 0.8 L6 5 L0.5 9.2z" fill="none" stroke="#888" stroke-width="1"/></svg>
<div class="a" style="left:1647px;top:568px;width:13px;height:13px;border:1px solid #9a9a9a;background:#fff"></div>
<svg class="a" style="left:1667px;top:567px" width="14" height="15" viewBox="0 0 14 15"><path d="M1 2 L5 0.5 L5 13.5 L1 15z" fill="#cfcfcf" stroke="#999" stroke-width="0.8"/><path d="M5 0.5 L9 2 L9 15 L5 13.5z" fill="#e8e8e8" stroke="#999" stroke-width="0.8"/><path d="M9 5 L13 6 L13 15 L9 15z" fill="#ddd" stroke="#999" stroke-width="0.8"/><path d="M10 10 L13 12 L13 15 L10 15z" fill="#4a7fd0"/></svg>
<div class="a" style="left:1689px;top:566px;font-size:13px;line-height:16px;color:#222;white-space:nowrap">27_歴史的風土特別保存地区</div>
<svg class="a" style="left:1632px;top:589px" width="7" height="10" viewBox="0 0 7 10"><path d="M0.5 0.8 L6 5 L0.5 9.2z" fill="none" stroke="#888" stroke-width="1"/></svg>
<div class="a" style="left:1647px;top:587px;width:13px;height:13px;border:1px solid #9a9a9a;background:#fff"></div>
<svg class="a" style="left:1667px;top:587px" width="14" height="15" viewBox="0 0 14 15"><path d="M1 2 L5 0.5 L5 13.5 L1 15z" fill="#cfcfcf" stroke="#999" stroke-width="0.8"/><path d="M5 0.5 L9 2 L9 15 L5 13.5z" fill="#e8e8e8" stroke="#999" stroke-width="0.8"/><path d="M9 5 L13 6 L13 15 L9 15z" fill="#ddd" stroke="#999" stroke-width="0.8"/><path d="M10 10 L13 12 L13 15 L10 15z" fill="#4a7fd0"/></svg>
<div class="a" style="left:1689px;top:586px;font-size:13px;line-height:16px;color:#222;white-space:nowrap">28_容積率</div>
<svg class="a" style="left:1632px;top:608px" width="7" height="10" viewBox="0 0 7 10"><path d="M0.5 0.8 L6 5 L0.5 9.2z" fill="none" stroke="#888" stroke-width="1"/></svg>
<div class="a" style="left:1647px;top:607px;width:13px;height:13px;border:1px solid #9a9a9a;background:#fff"></div>
<svg class="a" style="left:1667px;top:606px" width="14" height="15" viewBox="0 0 14 15"><path d="M1 2 L5 0.5 L5 13.5 L1 15z" fill="#cfcfcf" stroke="#999" stroke-width="0.8"/><path d="M5 0.5 L9 2 L9 15 L5 13.5z" fill="#e8e8e8" stroke="#999" stroke-width="0.8"/><path d="M9 5 L13 6 L13 15 L9 15z" fill="#ddd" stroke="#999" stroke-width="0.8"/><path d="M10 10 L13 12 L13 15 L10 15z" fill="#4a7fd0"/></svg>
<div class="a" style="left:1689px;top:605px;font-size:13px;line-height:16px;color:#222;white-space:nowrap">29_鉄軌道ブロック</div>
<svg class="a" style="left:1632px;top:628px" width="7" height="10" viewBox="0 0 7 10"><path d="M0.5 0.8 L6 5 L0.5 9.2z" fill="none" stroke="#888" stroke-width="1"/></svg>
<div class="a" style="left:1647px;top:626px;width:13px;height:13px;border:1px solid #9a9a9a;background:#fff"></div>
<svg class="a" style="left:1667px;top:626px" width="14" height="15" viewBox="0 0 14 15"><path d="M1 2 L5 0.5 L5 13.5 L1 15z" fill="#cfcfcf" stroke="#999" stroke-width="0.8"/><path d="M5 0.5 L9 2 L9 15 L5 13.5z" fill="#e8e8e8" stroke="#999" stroke-width="0.8"/><path d="M9 5 L13 6 L13 15 L9 15z" fill="#ddd" stroke="#999" stroke-width="0.8"/><path d="M10 10 L13 12 L13 15 L10 15z" fill="#4a7fd0"/></svg>
<div class="a" style="left:1689px;top:625px;font-size:13px;line-height:16px;color:#222;white-space:nowrap">51_都市計画基本図(DM)</div>
<svg class="a" style="left:1632px;top:647px" width="7" height="10" viewBox="0 0 7 10"><path d="M0.5 0.8 L6 5 L0.5 9.2z" fill="none" stroke="#888" stroke-width="1"/></svg>
<div class="a" style="left:1647px;top:646px;width:13px;height:13px;border:1px solid #9a9a9a;background:#fff"><div style="position:absolute;left:1px;top:1px;width:9px;height:9px;background:#2a3040"></div></div>
<svg class="a" style="left:1667px;top:645px" width="14" height="15" viewBox="0 0 14 15"><path d="M1 2 L5 0.5 L5 13.5 L1 15z" fill="#cfcfcf" stroke="#999" stroke-width="0.8"/><path d="M5 0.5 L9 2 L9 15 L5 13.5z" fill="#e8e8e8" stroke="#999" stroke-width="0.8"/><path d="M9 5 L13 6 L13 15 L9 15z" fill="#ddd" stroke="#999" stroke-width="0.8"/><path d="M10 10 L13 12 L13 15 L10 15z" fill="#4a7fd0"/></svg>
<div class="a" style="left:1689px;top:644px;font-size:13px;line-height:16px;color:#222;white-space:nowrap">90_メモ・テンポラリ</div>
<svg class="a" style="left:1632px;top:666px" width="7" height="10" viewBox="0 0 7 10"><path d="M0.5 0.8 L6 5 L0.5 9.2z" fill="none" stroke="#888" stroke-width="1"/></svg>
<div class="a" style="left:1647px;top:665px;width:13px;height:13px;border:1px solid #9a9a9a;background:#fff"></div>
<svg class="a" style="left:1667px;top:664px" width="14" height="15" viewBox="0 0 14 15"><path d="M1 2 L5 0.5 L5 13.5 L1 15z" fill="#cfcfcf" stroke="#999" stroke-width="0.8"/><path d="M5 0.5 L9 2 L9 15 L5 13.5z" fill="#e8e8e8" stroke="#999" stroke-width="0.8"/><path d="M9 5 L13 6 L13 15 L9 15z" fill="#ddd" stroke="#999" stroke-width="0.8"/><path d="M10 10 L13 12 L13 15 L10 15z" fill="#4a7fd0"/></svg>
<div class="a" style="left:1689px;top:663px;font-size:13px;line-height:16px;color:#222;white-space:nowrap">91_真の筆図形</div>
<svg class="a" style="left:1632px;top:686px" width="7" height="10" viewBox="0 0 7 10"><path d="M0.5 0.8 L6 5 L0.5 9.2z" fill="none" stroke="#888" stroke-width="1"/></svg>
<div class="a" style="left:1647px;top:684px;width:13px;height:13px;border:1px solid #9a9a9a;background:#fff"><svg style="position:absolute;left:0;top:0" width="11" height="11" viewBox="0 0 11 11"><path d="M2 5.5 L4.5 8 L9.5 2.5" fill="none" stroke="#222" stroke-width="1.6"/></svg></div>
<svg class="a" style="left:1667px;top:684px" width="14" height="15" viewBox="0 0 14 15"><path d="M1 2 L5 0.5 L5 13.5 L1 15z" fill="#cfcfcf" stroke="#999" stroke-width="0.8"/><path d="M5 0.5 L9 2 L9 15 L5 13.5z" fill="#e8e8e8" stroke="#999" stroke-width="0.8"/><path d="M9 5 L13 6 L13 15 L9 15z" fill="#ddd" stroke="#999" stroke-width="0.8"/><path d="M10 10 L13 12 L13 15 L10 15z" fill="#4a7fd0"/></svg>
<div class="a" style="left:1689px;top:683px;font-size:13px;line-height:16px;color:#222;white-space:nowrap">92_管内図</div>
<div class="a" style="left:1620px;top:828px;width:288px;height:27px;border-radius:5px;background:linear-gradient(#ededed 0,#ededed 50%,#e5e5e5 50%,#e5e5e5 100%);border:1px solid #dcdcdc"></div>
<svg class="a" style="left:1634px;top:837px" width="6" height="9" viewBox="0 0 6 9"><path d="M0 0 L5 4.5 L0 9z" fill="#777"/></svg>
<div class="a" style="left:1651px;top:833px;font-size:13px;line-height:16px;color:#777;white-space:nowrap">マップチップ</div>
<div class="a" style="left:1620px;top:857px;width:288px;height:27px;border-radius:5px;background:linear-gradient(#ededed 0,#ededed 50%,#e5e5e5 50%,#e5e5e5 100%);border:1px solid #dcdcdc"></div>
<svg class="a" style="left:1634px;top:866px" width="6" height="9" viewBox="0 0 6 9"><path d="M0 0 L5 4.5 L0 9z" fill="#777"/></svg>
<div class="a" style="left:1651px;top:862px;font-size:13px;line-height:16px;color:#777;white-space:nowrap">主題図</div>
<div class="a" style="left:1614px;top:888px;width:300px;height:23px;background:#ebebeb;border-radius:0 0 9px 9px"></div>
<div class="a" style="left:1626px;top:889px;font-size:12px;line-height:16px;color:#222;white-space:nowrap">同期モード</div>
<div class="a" style="left:1694px;top:891px;width:14px;height:14px;border:1px solid #777;border-radius:3px;background:#fff"></div>
<div class="a" style="left:1708px;top:891px;font-size:12px;line-height:16px;color:#222">位置</div>
<div class="a" style="left:1740px;top:891px;width:14px;height:14px;border:1px solid #777;border-radius:3px;background:#fff"></div>
<div class="a" style="left:1753px;top:891px;font-size:12px;line-height:16px;color:#222">縮尺</div>
<div class="a" style="left:1786px;top:889px;width:67px;height:22px;border:1.5px solid #111;background:#fff;font-size:12px;line-height:20px;text-align:center;color:#222;white-space:nowrap">位置あわせ</div>
<!--/RP-->
<div id="dlg" class="a"></div>
<!--DLG-->
<div class="a" style="left:1027px;top:91px;width:560px;height:24px;background:#8ab8fb;border-radius:6px 6px 0 0"></div>
<div class="a" style="left:1038px;top:96px;font-weight:bold;color:#fff;font-size:12px;line-height:16px">土地照会</div>
<svg class="a" style="left:1566px;top:99px" width="12" height="12" viewBox="0 0 12 12"><path d="M2.5 1.5 L9.5 8 M9.5 1.5 L2.5 8" stroke="#fff" stroke-width="1.3"/><rect x="1" y="10.3" width="10" height="1.2" fill="#fff"/></svg>
<div class="c" style="left:1037px;top:126px;width:81px;height:21px;background:#e6e6e6;line-height:20px;text-align:center;color:#222;font-size:12px;">字CD</div>
<div class="c" style="left:1037px;top:146px;width:81px;height:21px;background:#e6e6e6;line-height:20px;text-align:center;color:#222;font-size:12px;"></div>
<div class="a" style="left:1038px;top:147px;width:79px;height:19px;background:#e8e8ec;border:1px solid #8c8c94;border-radius:3px;text-align:center;line-height:17px;font-size:12px;color:#222">地番</div>
<div class="c" style="left:1117px;top:126px;width:303px;height:21px;background:#fff;line-height:20px;padding-left:2px;color:#222;font-size:12px;letter-spacing:0.5px;">161604</div>
<div class="a" style="left:1300px;top:128px;font-size:12px;line-height:16px;color:#222">町</div>
<div class="c" style="left:1117px;top:146px;width:303px;height:21px;background:#fff;line-height:20px;padding-left:2px;color:#222;font-size:12px;letter-spacing:0.5px;">590</div>
<div class="c" style="left:1419px;top:126px;width:71px;height:21px;background:#e6e6e6;line-height:20px;text-align:center;color:#222;font-size:12px;">土地ID</div>
<div class="c" style="left:1419px;top:146px;width:71px;height:21px;background:#e6e6e6;line-height:20px;text-align:center;color:#222;font-size:12px;">現況判定</div>
<div class="c" style="left:1489px;top:126px;width:89px;height:21px;background:#fff;line-height:20px;padding-left:2px;color:#222;font-size:12px;"></div>
<div class="a" style="left:1490px;top:127px;width:86px;height:19px;border:2px solid #b4b4b8;border-right-color:#ccc;border-bottom-color:#ccc;background:#fff;padding-left:1px;line-height:15px;font-size:12px;color:#222">188903</div>
<div class="c" style="left:1489px;top:146px;width:89px;height:21px;background:#fff;line-height:20px;padding-left:2px;color:#222;font-size:12px;"></div>
<div class="a" style="left:1037.3px;top:174.2px;width:13px;height:13px;border-radius:50%;border:1.5px solid #1a73e8;background:#fff"><div style="position:absolute;left:2px;top:2px;width:7px;height:7px;border-radius:50%;background:#1a73e8"></div></div>
<div class="a" style="left:1052px;top:172px;font-size:12px;line-height:16px;color:#222">土地選択</div>
<div class="a" style="left:1104.4px;top:174.2px;width:13px;height:13px;border-radius:50%;border:1.5px solid #777;background:#fff"></div>
<div class="a" style="left:1119px;top:172px;font-size:12px;line-height:16px;color:#222">納税者名寄せ</div>
<div class="a" style="left:1195.5px;top:174.2px;width:13px;height:13px;border-radius:50%;border:1.5px solid #c8c8c8;background:#fff"></div>
<div class="a" style="left:1226.5px;top:174.2px;width:13px;height:13px;border-radius:50%;border:1.5px solid #777;background:#fff"></div>
<div class="a" style="left:1241px;top:172px;font-size:12px;line-height:16px;color:#222">評価合算</div>
<div class="a" style="left:1293.5px;top:174.2px;width:13px;height:13px;border-radius:50%;border:1.5px solid #c8c8c8;background:#fff"></div>
<div class="a" style="left:1308px;top:172px;font-size:12px;line-height:16px;color:#aaa">住宅合算</div>
<div class="a" style="left:1037px;top:192px;width:439px;height:76px;border:1px solid #aaa;background:#fff"></div>
<div class="a" style="left:1038px;top:193px;width:437px;height:23px;background:linear-gradient(#f0f0f0 0,#f0f0f0 50%,#e4e4e4 50%,#e4e4e4 100%);border-bottom:1px solid #c8c8c8"></div>
<div class="a" style="left:1037px;top:193px;width:50px;height:23px;border-right:1px solid #d0d0d0;text-align:center;line-height:22px;font-size:12px;color:#555;overflow:hidden;white-space:nowrap">図形</div>
<div class="a" style="left:1038px;top:216px;width:49px;height:22px;background:#8ab8fb;border-right:1px solid #a0b4d0;border-bottom:1px solid #aaa;padding-left:3px;line-height:21px;font-size:12px;color:#111">登記</div>
<div class="a" style="left:1087px;top:193px;width:49px;height:23px;border-right:1px solid #d0d0d0;padding-left:3px;line-height:22px;font-size:12px;color:#555;overflow:hidden;white-space:nowrap">土地属性</div>
<div class="a" style="left:1087px;top:216px;width:49px;height:22px;background:#8ab8fb;border-right:1px solid #a0b4d0;border-bottom:1px solid #aaa;padding-left:3px;line-height:21px;font-size:12px;color:#111">有り</div>
<div class="a" style="left:1136px;top:193px;width:68px;height:23px;border-right:1px solid #d0d0d0;text-align:center;line-height:22px;font-size:12px;color:#555;overflow:hidden;white-space:nowrap">土地ID</div>
<div class="a" style="left:1136px;top:216px;width:68px;height:22px;background:#8ab8fb;border-right:1px solid #a0b4d0;border-bottom:1px solid #aaa;text-align:right;padding-right:2px;line-height:21px;font-size:12px;color:#111">188903</div>
<div class="a" style="left:1204px;top:193px;width:83px;height:23px;border-right:1px solid #d0d0d0;text-align:center;line-height:22px;font-size:12px;color:#555;overflow:hidden;white-space:nowrap">字CD</div>
<div class="a" style="left:1204px;top:216px;width:83px;height:22px;background:#8ab8fb;border-right:1px solid #a0b4d0;border-bottom:1px solid #aaa;padding-left:3px;line-height:21px;font-size:12px;color:#111">161604</div>
<div class="a" style="left:1287px;top:193px;width:83px;height:23px;border-right:1px solid #d0d0d0;text-align:center;line-height:22px;font-size:12px;color:#555;overflow:hidden;white-space:nowrap">地番</div>
<div class="a" style="left:1287px;top:216px;width:83px;height:22px;background:#8ab8fb;border-right:1px solid #a0b4d0;border-bottom:1px solid #aaa;padding-left:3px;line-height:21px;font-size:12px;color:#111">590</div>
<div class="a" style="left:1480px;top:192px;width:39px;height:19px;background:#e8e8ec;border:1px solid #8c8c94;border-radius:4px;text-align:center;line-height:17px;font-size:12px;color:#222">地図</div>
<div class="a" style="left:1521px;top:192px;width:38px;height:19px;background:#e8e8ec;border:1px solid #8c8c94;border-radius:4px;text-align:center;line-height:17px;font-size:12px;color:#222">履歴</div>
<div class="a" style="left:1480px;top:212px;width:39px;height:19px;background:#e8e8ec;border:1px solid #8c8c94;border-radius:4px;text-align:center;line-height:17px;font-size:12px;color:#222">一覧</div>
<div class="a" style="left:1480px;top:235px;width:96px;height:32px;border:1px solid #c4c4c4;background:#fff"></div>
<div class="a" style="left:1511px;top:235px;width:1px;height:32px;background:#c4c4c4"></div>
<div class="a" style="left:1543px;top:235px;width:1px;height:32px;background:#c4c4c4"></div>
<svg class="a" style="left:1480px;top:235px" width="96" height="32" viewBox="0 0 96 32">
<g fill="none" stroke="#222" stroke-width="2.4" stroke-linejoin="round"><rect x="6" y="7" width="20" height="22" rx="2"/></g>
<path d="M11 4 h10 v5 h-10z" fill="#222"/><circle cx="16" cy="4" r="2" fill="#222"/>
<path d="M34 11 q0-3 3-3 h5 l2-3 h8 l2 3 h5 q3 0 3 3 v15 q0 3-3 3 h-22 q-3 0-3-3z" fill="#222"/>
<circle cx="48" cy="18" r="6.5" fill="#fff"/>
<path d="M71 4 h18 v7 h-18z M67 12 q0-2 2-2 h22 q2 0 2 2 v11 h-4 v-5 h-18 v5 h-4z M72 20 h16 v9 h-16z" fill="#222"/>
<path d="M74 23 h10 M74 26 h8" stroke="#fff" stroke-width="1.5"/>
</svg>
<div class="a" style="left:1037px;top:271px;width:540px;height:1px;background:#aaa"></div>
<div class="a" style="left:1037px;top:279px;width:35px;height:24px;background:#8ab8fb;border-radius:5px 5px 0 0;text-align:center;line-height:23px;font-size:12px;color:#fff">固定</div>
<div class="a" style="left:1075px;top:279px;width:35px;height:24px;background:#dae8fc;border-radius:5px 5px 0 0;text-align:center;line-height:23px;font-size:12px;color:#555">詳細</div>
<div class="a" style="left:1113px;top:279px;width:36px;height:24px;background:#dae8fc;border-radius:5px 5px 0 0;text-align:center;line-height:23px;font-size:12px;color:#555">価格</div>
<div class="a" style="left:1151px;top:279px;width:36px;height:24px;background:#dae8fc;border-radius:5px 5px 0 0;text-align:center;line-height:23px;font-size:12px;color:#555">課税</div>
<div class="a" style="left:1368px;top:277px;width:78px;height:24px;border:1px solid #777;border-radius:2px;background:#fff;font-size:12px;line-height:20px;padding-left:1px;color:#111">令和08年<svg style="position:absolute;left:63px;top:8px" width="10" height="7" viewBox="0 0 10 7"><path d="M1 1 L5 5 L9 1" fill="none" stroke="#222" stroke-width="1.6"/></svg></div>
<div class="c" style="left:1037px;top:303px;width:81px;height:21px;background:#cce8fc;line-height:20px;padding-left:2px;color:#222;font-size:12px;">納税者CD</div>
<div class="c" style="left:1037px;top:323px;width:81px;height:21px;background:#cce8fc;line-height:20px;padding-left:2px;color:#222;font-size:12px;">住所</div>
<div class="c" style="left:1037px;top:343px;width:81px;height:21px;background:#cce8fc;line-height:20px;padding-left:2px;color:#222;font-size:12px;">氏名</div>
<div class="c" style="left:1117px;top:303px;width:21px;height:21px;background:#fff;line-height:20px;padding-left:2px;color:#222;font-size:12px;letter-spacing:0.5px;">17</div>
<div class="c" style="left:1137px;top:303px;width:21px;height:21px;background:#fff;line-height:20px;padding-left:2px;color:#222;font-size:12px;letter-spacing:0.5px;">23</div>
<div class="c" style="left:1157px;top:303px;width:21px;height:21px;background:#fff;line-height:20px;padding-left:2px;color:#222;font-size:12px;letter-spacing:0.5px;">00</div>
<div class="c" style="left:1177px;top:303px;width:41px;height:21px;background:#fff;line-height:20px;padding-left:2px;color:#222;font-size:12px;letter-spacing:0.5px;">0552</div>
<div class="c" style="left:1217px;top:303px;width:181px;height:21px;background:#fff;line-height:20px;padding-left:2px;color:#222;font-size:12px;"></div>
<div class="a" style="left:1397px;top:303px;width:71px;height:21px;background:#e8e8ec;border:1px solid #8c8c94;border-radius:3px;text-align:center;line-height:19px;font-size:12px;color:#222">名寄せ</div>
<div class="c" style="left:1117px;top:323px;width:351px;height:21px;background:#fff;line-height:20px;padding-left:4px;color:#222;font-size:12px;letter-spacing:0px">１７２３０００５５２</div>
<div class="c" style="left:1117px;top:343px;width:351px;height:21px;background:#fff;line-height:20px;padding-left:4px;color:#222;font-size:12px;">１７２３０００５５２</div>
<div class="c" style="left:1037px;top:368px;width:81px;height:21px;background:#cce8fc;line-height:20px;padding-left:2px;color:#222;font-size:12px;">調整S</div>
<div class="c" style="left:1117px;top:368px;width:136px;height:21px;background:#fff;line-height:20px;padding-left:2px;color:#222;font-size:12px;">0 市街化区域内</div>
<div class="c" style="left:1252px;top:368px;width:81px;height:21px;background:#cce8fc;line-height:20px;padding-left:2px;color:#222;font-size:12px;">敷地権S</div>
<div class="c" style="left:1332px;top:368px;width:136px;height:21px;background:#fff;line-height:20px;padding-left:2px;color:#222;font-size:12px;letter-spacing:0.5px;">0</div>
<div class="c" style="left:1037px;top:393px;width:81px;height:21px;background:#cce8fc;line-height:20px;padding-left:2px;color:#222;font-size:12px;">登記地目</div>
<div class="c" style="left:1117px;top:393px;width:136px;height:21px;background:#fff;line-height:20px;padding-left:2px;color:#222;font-size:12px;">03 宅地</div>
<div class="c" style="left:1252px;top:393px;width:81px;height:21px;background:#cce8fc;line-height:20px;padding-left:2px;color:#222;font-size:12px;">登記地積</div>
<div class="c" style="left:1332px;top:393px;width:136px;height:21px;background:#fff;line-height:20px;padding-left:2px;color:#222;font-size:12px;letter-spacing:0.5px;">258.35</div>
<div class="c" style="left:1037px;top:413px;width:81px;height:21px;background:#cce8fc;line-height:20px;padding-left:2px;color:#222;font-size:12px;">評価地目</div>
<div class="c" style="left:1117px;top:413px;width:136px;height:21px;background:#fff;line-height:20px;padding-left:2px;color:#222;font-size:12px;">32 高度商業Ⅱ</div>
<div class="c" style="left:1252px;top:413px;width:81px;height:21px;background:#cce8fc;line-height:20px;padding-left:2px;color:#222;font-size:12px;">評価地積</div>
<div class="c" style="left:1332px;top:413px;width:136px;height:21px;background:#fff;line-height:20px;padding-left:2px;color:#222;font-size:12px;letter-spacing:0.5px;">258.35</div>
<div class="c" style="left:1037px;top:433px;width:81px;height:21px;background:#cce8fc;line-height:20px;padding-left:2px;color:#222;font-size:12px;">地積差異</div>
<div class="c" style="left:1117px;top:433px;width:136px;height:21px;background:#fff;line-height:20px;padding-left:2px;color:#222;font-size:12px;letter-spacing:0.5px;">0</div>
<div class="c" style="left:1252px;top:433px;width:81px;height:21px;background:#cce8fc;line-height:20px;padding-left:2px;color:#222;font-size:12px;">合画地積</div>
<div class="c" style="left:1332px;top:433px;width:136px;height:21px;background:#fff;line-height:20px;padding-left:2px;color:#222;font-size:12px;letter-spacing:0.5px;">270.01</div>
<div class="c" style="left:1037px;top:453px;width:81px;height:21px;background:#cce8fc;line-height:20px;padding-left:2px;color:#222;font-size:12px;">代表地番CD</div>
<div class="c" style="left:1117px;top:453px;width:136px;height:21px;background:#fff;line-height:20px;padding-left:2px;color:#222;font-size:12px;letter-spacing:0.5px;">161604</div>
<div class="c" style="left:1252px;top:453px;width:81px;height:21px;background:#cce8fc;line-height:20px;padding-left:2px;color:#222;font-size:12px;">代表地番</div>
<div class="c" style="left:1332px;top:453px;width:136px;height:21px;background:#fff;line-height:20px;padding-left:2px;color:#222;font-size:12px;letter-spacing:0.5px;">590</div>
<div class="c" style="left:1037px;top:473px;width:81px;height:21px;background:#cce8fc;line-height:20px;padding-left:2px;color:#222;font-size:12px;">類似土地CD</div>
<div class="c" style="left:1117px;top:473px;width:136px;height:21px;background:#fff;line-height:20px;padding-left:2px;color:#222;font-size:12px;"></div>
<div class="c" style="left:1252px;top:473px;width:81px;height:21px;background:#cce8fc;line-height:20px;padding-left:2px;color:#222;font-size:12px;">類似土地地番</div>
<div class="c" style="left:1332px;top:473px;width:136px;height:21px;background:#fff;line-height:20px;padding-left:2px;color:#222;font-size:12px;"></div>
<div class="c" style="left:1037px;top:498px;width:81px;height:21px;background:#cce8fc;line-height:20px;padding-left:2px;color:#222;font-size:12px;">課税区分</div>
<div class="c" style="left:1117px;top:498px;width:136px;height:21px;background:#fff;line-height:20px;padding-left:2px;color:#222;font-size:12px;">00 課税</div>
<div class="c" style="left:1252px;top:498px;width:81px;height:21px;background:#cce8fc;line-height:20px;padding-left:2px;color:#222;font-size:12px;">非課税地積</div>
<div class="c" style="left:1332px;top:498px;width:136px;height:21px;background:#fff;line-height:20px;padding-left:2px;color:#222;font-size:12px;"></div>
<div class="c" style="left:1332px;top:498px;width:71px;height:21px;background:#fff;line-height:20px;padding-left:2px;color:#222;font-size:12px;letter-spacing:0.5px;">0.00</div>
<div class="a" style="left:1402px;top:498px;width:66px;height:21px;background:#ededed;border:1px solid #c8c8c8;border-radius:3px"></div>
<div class="c" style="left:1037px;top:518px;width:81px;height:21px;background:#cce8fc;line-height:20px;padding-left:2px;color:#222;font-size:12px;">適用開始</div>
<div class="c" style="left:1117px;top:518px;width:136px;height:21px;background:#fff;line-height:20px;padding-left:2px;color:#222;font-size:12px;"></div>
<div class="c" style="left:1252px;top:518px;width:81px;height:21px;background:#cce8fc;line-height:20px;padding-left:2px;color:#222;font-size:12px;">適用終了</div>
<div class="c" style="left:1332px;top:518px;width:136px;height:21px;background:#fff;line-height:20px;padding-left:2px;color:#222;font-size:12px;"></div>
<div class="c" style="left:1037px;top:538px;width:81px;height:21px;background:#cce8fc;line-height:20px;padding-left:2px;color:#222;font-size:12px;">非課税理由</div>
<div class="c" style="left:1117px;top:538px;width:351px;height:21px;background:#fff;line-height:20px;padding-left:2px;color:#222;font-size:12px;"></div>
<div class="c" style="left:1037px;top:563px;width:81px;height:41px;background:#cce8fc;line-height:40px;padding-left:2px;color:#222;font-size:12px;">減免等CD</div>
<div class="c" style="left:1117px;top:563px;width:351px;height:41px;background:#fff;line-height:40px;padding-left:2px;color:#222;font-size:12px;letter-spacing:0.5px;">000</div>
<div class="c" style="left:1037px;top:603px;width:81px;height:21px;background:#cce8fc;line-height:20px;padding-left:2px;color:#222;font-size:12px;">減免等割合</div>
<div class="c" style="left:1117px;top:603px;width:351px;height:21px;background:#fff;line-height:20px;padding-left:2px;color:#222;font-size:12px;letter-spacing:0.5px;">0.00</div>
<div class="c" style="left:1037px;top:623px;width:81px;height:21px;background:#cce8fc;line-height:20px;padding-left:2px;color:#222;font-size:12px;">適用開始年</div>
<div class="c" style="left:1117px;top:623px;width:136px;height:21px;background:#fff;line-height:20px;padding-left:2px;color:#222;font-size:12px;"></div>
<div class="c" style="left:1252px;top:623px;width:81px;height:21px;background:#cce8fc;line-height:20px;padding-left:2px;color:#222;font-size:12px;">適用終了年</div>
<div class="c" style="left:1332px;top:623px;width:136px;height:21px;background:#fff;line-height:20px;padding-left:2px;color:#222;font-size:12px;"></div>
<div class="c" style="left:1037px;top:643px;width:81px;height:21px;background:#cce8fc;line-height:20px;padding-left:2px;color:#222;font-size:12px;">減免等率固</div>
<div class="c" style="left:1117px;top:643px;width:136px;height:21px;background:#fff;line-height:20px;padding-left:2px;color:#222;font-size:12px;"></div>
<div class="c" style="left:1252px;top:643px;width:81px;height:21px;background:#cce8fc;line-height:20px;padding-left:2px;color:#222;font-size:12px;">減免等率都</div>
<div class="c" style="left:1332px;top:643px;width:136px;height:21px;background:#fff;line-height:20px;padding-left:2px;color:#222;font-size:12px;"></div>
<div class="c" style="left:1037px;top:663px;width:81px;height:21px;background:#cce8fc;line-height:20px;padding-left:2px;color:#222;font-size:12px;">連携データ</div>
<div class="c" style="left:1117px;top:663px;width:351px;height:21px;background:#fff;line-height:20px;padding-left:2px;color:#222;font-size:12px;"></div>
<div class="c" style="left:1037px;top:689px;width:81px;height:21px;background:#cce8fc;line-height:20px;padding-left:2px;color:#222;font-size:12px;">住宅用地S</div>
<div class="c" style="left:1117px;top:689px;width:237px;height:21px;background:#fff;line-height:20px;padding-left:2px;color:#222;font-size:12px;">6 非住宅</div>
<div class="c" style="left:1353px;top:689px;width:81px;height:21px;background:#cce8fc;line-height:20px;padding-left:2px;color:#222;font-size:12px;">住宅用地割合</div>
<div class="c" style="left:1433px;top:689px;width:35px;height:21px;background:#fff;line-height:20px;padding-left:2px;color:#222;font-size:12px;letter-spacing:0.5px;">0.00</div>
<div class="c" style="left:1037px;top:709px;width:81px;height:21px;background:#cce8fc;line-height:20px;padding-left:2px;color:#222;font-size:12px;">小規模S</div>
<div class="c" style="left:1117px;top:709px;width:41px;height:21px;background:#fff;line-height:20px;padding-left:2px;color:#222;font-size:12px;letter-spacing:0.5px;">0</div>
<div class="c" style="left:1157px;top:709px;width:32px;height:21px;background:#cce8fc;line-height:20px;padding-left:1px;color:#222;font-size:12px;">戸数</div>
<div class="c" style="left:1188px;top:709px;width:31px;height:21px;background:#fff;line-height:20px;padding-left:2px;color:#222;font-size:12px;letter-spacing:0.5px;">0</div>
<div class="c" style="left:1218px;top:709px;width:55px;height:21px;background:#cce8fc;line-height:20px;padding-left:1px;color:#222;font-size:12px;">合計面積</div>
<div class="c" style="left:1272px;top:709px;width:82px;height:21px;background:#fff;line-height:20px;padding-left:2px;color:#222;font-size:12px;letter-spacing:0.5px;">0.00</div>
<div class="c" style="left:1353px;top:709px;width:81px;height:21px;background:#cce8fc;line-height:20px;padding-left:2px;color:#222;font-size:12px;">小規模割合</div>
<div class="c" style="left:1433px;top:709px;width:35px;height:21px;background:#fff;line-height:20px;padding-left:2px;color:#222;font-size:12px;letter-spacing:0.5px;">0.00</div>
<div class="c" style="left:1037px;top:729px;width:81px;height:21px;background:#cce8fc;line-height:20px;padding-left:2px;color:#222;font-size:12px;">住宅用地率</div>
<div class="c" style="left:1117px;top:729px;width:136px;height:21px;background:#fff;line-height:20px;padding-left:2px;color:#222;font-size:12px;letter-spacing:0.5px;">0.00</div>
<div class="c" style="left:1252px;top:729px;width:81px;height:21px;background:#cce8fc;line-height:20px;padding-left:2px;color:#222;font-size:12px;">小規模率</div>
<div class="c" style="left:1332px;top:729px;width:136px;height:21px;background:#fff;line-height:20px;padding-left:2px;color:#222;font-size:12px;letter-spacing:0.5px;">0.0000</div>
<div class="c" style="left:1037px;top:754px;width:81px;height:21px;background:#cce8fc;line-height:20px;padding-left:2px;color:#222;font-size:12px;">農地区分</div>
<div class="c" style="left:1117px;top:754px;width:136px;height:21px;background:#fff;line-height:20px;padding-left:2px;color:#222;font-size:12px;letter-spacing:0.5px;">0</div>
<div class="c" style="left:1252px;top:754px;width:81px;height:21px;background:#cce8fc;line-height:20px;padding-left:2px;color:#222;font-size:12px;">適用年度</div>
<div class="c" style="left:1332px;top:754px;width:136px;height:21px;background:#fff;line-height:20px;padding-left:2px;color:#222;font-size:12px;"></div>
<div class="c" style="left:1037px;top:774px;width:81px;height:21px;background:#cce8fc;line-height:20px;padding-left:2px;color:#222;font-size:12px;">生緑S</div>
<div class="c" style="left:1117px;top:774px;width:41px;height:21px;background:#fff;line-height:20px;padding-left:2px;color:#222;font-size:12px;letter-spacing:0.5px;">0</div>
<div class="c" style="left:1157px;top:774px;width:51px;height:21px;background:#cce8fc;line-height:20px;padding-left:1px;color:#222;font-size:12px;">宅地化S</div>
<div class="c" style="left:1207px;top:774px;width:46px;height:21px;background:#fff;line-height:20px;padding-left:2px;color:#222;font-size:12px;letter-spacing:0.5px;">0</div>
<div class="c" style="left:1252px;top:774px;width:81px;height:21px;background:#cce8fc;line-height:20px;padding-left:2px;color:#222;font-size:12px;">３８年価格</div>
<div class="c" style="left:1332px;top:774px;width:136px;height:21px;background:#fff;line-height:20px;padding-left:2px;color:#222;font-size:12px;"></div>
<div class="c" style="left:1037px;top:798px;width:81px;height:21px;background:#cce8fc;line-height:20px;padding-left:2px;color:#222;font-size:12px;">仮換地S</div>
<div class="c" style="left:1117px;top:798px;width:136px;height:21px;background:#fff;line-height:20px;padding-left:2px;color:#222;font-size:12px;letter-spacing:0.5px;">0</div>
<div class="c" style="left:1252px;top:798px;width:81px;height:21px;background:#cce8fc;line-height:20px;padding-left:2px;color:#222;font-size:12px;">換地年月日</div>
<div class="c" style="left:1332px;top:798px;width:136px;height:21px;background:#fff;line-height:20px;padding-left:2px;color:#222;font-size:12px;"></div>
<div class="a" style="left:1037px;top:822px;width:540px;height:1px;background:#aaa"></div>
<div class="a" style="left:1037px;top:826px;width:45px;height:20px;background:#ffc30d;border:2px solid #6c6c6c;text-align:center;line-height:16px;font-size:12px;color:#000">登記</div>
<div class="a" style="left:1087px;top:826px;width:45px;height:20px;background:#ffc30d;border:2px solid #6c6c6c;text-align:center;line-height:16px;font-size:12px;color:#000">特記</div>
<div class="a" style="left:1027px;top:857px;width:560px;height:30px;background:#dae7fc"></div>
<svg class="a" style="left:1278px;top:864px" width="18" height="17" viewBox="0 0 18 17"><rect x="1" y="1" width="16" height="15" fill="none" stroke="#333" stroke-width="2"/><path d="M5 4.5 L13 12.5 M13 4.5 L5 12.5" stroke="#333" stroke-width="1.8"/></svg>
<div class="a" style="left:1303px;top:864px;font-size:12px;line-height:16px;color:#333">閉じる</div>
<svg class="a" style="left:1574px;top:873px" width="10" height="10" viewBox="0 0 10 10"><path d="M9 2 L2 9 M9 5 L5 9 M9 8 L8 9" stroke="#777" stroke-width="1"/></svg>
<!--/DLG-->
</body></html>
